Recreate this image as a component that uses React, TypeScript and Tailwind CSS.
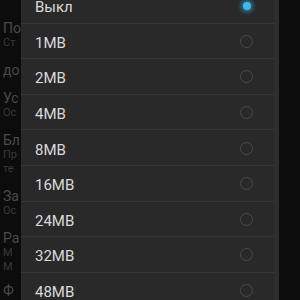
import React from "react";

const items = ["Выкл", "1MB", "2MB", "4MB", "8MB", "16MB", "24MB", "32MB", "48MB"];

export default function App() {
  return (
    <div
      className="relative w-[300px] h-[300px] overflow-hidden bg-[#0c0c0c]"
      style={{ fontFamily: '"Roboto", "Liberation Sans", sans-serif' }}
    >
      {/* background settings list (dimmed) */}
      <div className="w-[21px] whitespace-nowrap flex flex-col pl-[3px] pt-[20px] text-[#4a4a4a]">
        <div className="text-[14px] leading-[16px]">По</div>
        <div className="text-[11px] leading-[14px] text-[#3a3a3a]">Ст</div>
        <div className="mt-[12px] text-[14px] leading-[16px]">до</div>
        <div className="mt-[12px] text-[14px] leading-[16px]">Ус</div>
        <div className="text-[11px] leading-[14px] text-[#3a3a3a]">Ос</div>
        <div className="mt-[12px] text-[14px] leading-[16px]">Бл</div>
        <div className="text-[11px] leading-[14px] text-[#3a3a3a]">Пр</div>
        <div className="text-[11px] leading-[14px] text-[#3a3a3a]">те</div>
        <div className="mt-[12px] text-[14px] leading-[16px]">За</div>
        <div className="text-[11px] leading-[14px] text-[#3a3a3a]">Ос</div>
        <div className="mt-[12px] text-[14px] leading-[16px]">Ра</div>
        <div className="text-[11px] leading-[14px] text-[#3a3a3a]">М</div>
        <div className="text-[11px] leading-[14px] text-[#3a3a3a]">М</div>
        <div className="mt-[8px] text-[14px] leading-[16px]">Ф</div>
      </div>

      {/* dialog */}
      <div className="absolute left-[21px] top-0 w-[258px] h-[300px] bg-[#292929] border-r-[5px] border-[#2e2e2e]">
        <div className="flex flex-col -mt-[12px]">
          {items.map((it, i) => (
            <div
              key={it}
              className="flex items-center h-[35.6px] shrink-0 border-b border-[#373737] pl-[14px] pr-[21px]"
            >
              <span className="relative top-[2px] flex-1 text-[15px] leading-[14px] text-[#dadada]">{it}</span>
              {i === 0 ? (
                <span className="w-[13px] h-[13px] mt-[2px] flex items-center justify-center">
                  <span className="w-[8px] h-[8px] rounded-full bg-[#3fb8ea] shadow-[0_0_4px_2px_rgba(51,181,229,0.6)]" />
                </span>
              ) : (
                <span className="w-[13px] h-[13px] mt-[1px] rounded-full border-[1.5px] border-[#4a4a4a]" />
              )}
            </div>
          ))}
        </div>
      </div>
    </div>
  );
}
